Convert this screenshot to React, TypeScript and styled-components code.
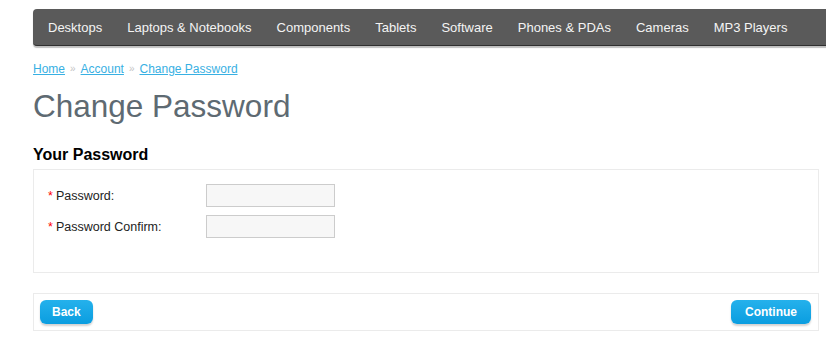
import React from 'react';
import styled, { createGlobalStyle } from 'styled-components';

const GlobalStyle = createGlobalStyle`
	body {
		margin: 0;
		background: #fff;
		font-family: 'Liberation Sans', Arial, sans-serif;
		overflow: hidden;
	}
`;

const Page = styled.div`
	padding: 9px 0 0 33px;
	width: 786px;
`;

const MenuBar = styled.nav`
	width: 900px;
	height: 37px;
	background: #5a5a5a;
	border-radius: 4px;
	box-shadow: 0 2px 1px rgba(0, 0, 0, 0.25);
	border-bottom: 1px solid #2f2f2f;
	box-sizing: border-box;
	display: flex;
	align-items: center;
	padding-left: 2.5px;
`;

const MenuLink = styled.a`
	color: #f4f4f4;
	font-size: 13px;
	padding: 0 12.5px;
	text-decoration: none;
	white-space: nowrap;
`;

const Breadcrumb = styled.div`
	margin-top: 15px;
	font-size: 12px;
	line-height: 16px;
	display: flex;
	align-items: center;
	gap: 5px;
`;

const Crumb = styled.a`
	color: #38b0e3;
	text-decoration: underline;
`;

const Sep = styled.span`
	color: #c4c4c4;
	font-size: 10px;
`;

const Title = styled.h1`
	margin: 11px 0 0;
	font-size: 31.5px;
	line-height: 36px;
	font-weight: normal;
	color: #5e6a72;
`;

const SectionTitle = styled.h2`
	margin: 21px 0 0;
	font-size: 16px;
	line-height: 20px;
	font-weight: bold;
	color: #000;
`;

const FieldBox = styled.div`
	margin-top: 4px;
	border: 1px solid #ebebeb;
	padding: 14px 14px 34px;
	display: grid;
	grid-template-columns: 158px 129px;
	row-gap: 8px;
	align-items: center;
`;

const Label = styled.label`
	font-size: 12.5px;
	color: #222;
`;

const Required = styled.span`
	color: #f00;
	margin-right: 3px;
`;

const Input = styled.input`
	width: 129px;
	height: 23px;
	box-sizing: border-box;
	background: #f7f7f7;
	border: 1px solid #cccccc;
	margin: 0;
	padding: 2px 4px;
	font-family: inherit;
`;

const ButtonBar = styled.div`
	margin-top: 20px;
	border: 1px solid #ebebeb;
	padding: 6px 7px 6px 6px;
	display: flex;
	justify-content: space-between;
	align-items: center;
`;

const Button = styled.button<{ $wide?: boolean }>`
	height: 24px;
	padding: 0 ${(p) => (p.$wide ? 14 : 12)}px;
	border: none;
	border-radius: 6px;
	background: linear-gradient(#25b1ec, #0a9de0);
	color: #fff;
	font-family: inherit;
	font-size: 12px;
	font-weight: bold;
	box-shadow: 0 2px 2px rgba(0, 0, 0, 0.18);
	cursor: pointer;
`;

const menu = [
	'Desktops',
	'Laptops & Notebooks',
	'Components',
	'Tablets',
	'Software',
	'Phones & PDAs',
	'Cameras',
	'MP3 Players',
];

const fields = ['Password:', 'Password Confirm:'];

const App = () => {
	return (
		<Page>
			<GlobalStyle />
			<MenuBar>
				{menu.map((item) => (
					<MenuLink key={item} href="#">
						{item}
					</MenuLink>
				))}
			</MenuBar>
			<Breadcrumb>
				<Crumb href="#">Home</Crumb>
				<Sep>»</Sep>
				<Crumb href="#">Account</Crumb>
				<Sep>»</Sep>
				<Crumb href="#">Change Password</Crumb>
			</Breadcrumb>
			<Title>Change Password</Title>
			<SectionTitle>Your Password</SectionTitle>
			<FieldBox>
				{fields.map((f) => (
					<React.Fragment key={f}>
						<Label>
							<Required>*</Required>
							{f}
						</Label>
						<Input type="password" />
					</React.Fragment>
				))}
			</FieldBox>
			<ButtonBar>
				<Button>Back</Button>
				<Button $wide>Continue</Button>
			</ButtonBar>
		</Page>
	);
};

export default App;
